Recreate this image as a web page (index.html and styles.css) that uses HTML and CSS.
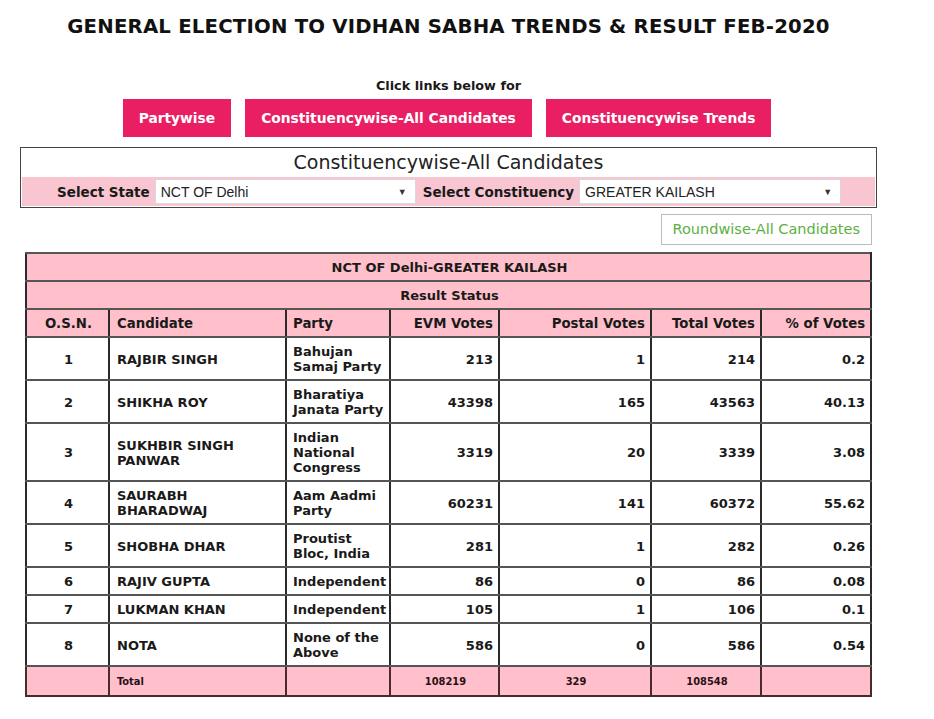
FILE: index.html
```html
<!DOCTYPE html>
<html>
<head>
<meta charset="utf-8">
<title>Election Result</title>
<link rel="stylesheet" href="styles.css">
</head>
<body>
<div class="page">
  <h1 class="title">GENERAL ELECTION TO VIDHAN SABHA TRENDS &amp; RESULT FEB-2020</h1>
  <p class="click">Click links below for</p>
  <div class="links">
    <a class="btn">Partywise</a>
    <a class="btn">Constituencywise-All Candidates</a>
    <a class="btn">Constituencywise Trends</a>
  </div>
  <div class="box">
    <div class="box-title">Constituencywise-All Candidates</div>
    <div class="select-row">
      <span class="label">Select State</span>
      <div class="select s1"><span>NCT OF Delhi</span><span class="arrow">▼</span></div>
      <span class="label">Select Constituency</span>
      <div class="select s2"><span>GREATER KAILASH</span><span class="arrow">▼</span></div>
    </div>
  </div>
  <div class="round-wrap"><a class="round">Roundwise-All Candidates</a></div>
  <table class="result">
    <colgroup>
      <col class="c1"><col class="c2"><col class="c3"><col class="c4"><col class="c5"><col class="c6"><col class="c7">
    </colgroup>
    <tr class="pink"><td colspan="7" class="center">NCT OF Delhi-GREATER KAILASH</td></tr>
    <tr class="pink"><td colspan="7" class="center">Result Status</td></tr>
    <tr class="pink head">
      <td class="center">O.S.N.</td><td>Candidate</td><td class="party">Party</td>
      <td class="num">EVM Votes</td><td class="num">Postal Votes</td><td class="num">Total Votes</td><td class="num">% of Votes</td>
    </tr>
    <tr><td class="center">1</td><td>RAJBIR SINGH</td><td class="party">Bahujan Samaj Party</td><td class="num">213</td><td class="num">1</td><td class="num">214</td><td class="num">0.2</td></tr>
    <tr><td class="center">2</td><td>SHIKHA ROY</td><td class="party">Bharatiya Janata Party</td><td class="num">43398</td><td class="num">165</td><td class="num">43563</td><td class="num">40.13</td></tr>
    <tr><td class="center">3</td><td>SUKHBIR SINGH PANWAR</td><td class="party">Indian National Congress</td><td class="num">3319</td><td class="num">20</td><td class="num">3339</td><td class="num">3.08</td></tr>
    <tr><td class="center">4</td><td class="narrow">SAURABH BHARADWAJ</td><td class="party">Aam Aadmi Party</td><td class="num">60231</td><td class="num">141</td><td class="num">60372</td><td class="num">55.62</td></tr>
    <tr><td class="center">5</td><td>SHOBHA DHAR</td><td class="party">Proutist Bloc, India</td><td class="num">281</td><td class="num">1</td><td class="num">282</td><td class="num">0.26</td></tr>
    <tr><td class="center">6</td><td>RAJIV GUPTA</td><td class="party">Independent</td><td class="num">86</td><td class="num">0</td><td class="num">86</td><td class="num">0.08</td></tr>
    <tr><td class="center">7</td><td>LUKMAN KHAN</td><td class="party">Independent</td><td class="num">105</td><td class="num">1</td><td class="num">106</td><td class="num">0.1</td></tr>
    <tr><td class="center">8</td><td>NOTA</td><td class="party">None of the Above</td><td class="num">586</td><td class="num">0</td><td class="num">586</td><td class="num">0.54</td></tr>
    <tr class="pink total"><td></td><td>Total</td><td></td><td class="center">108219</td><td class="center">329</td><td class="center">108548</td><td></td></tr>
  </table>
</div>
</body>
</html>
```
FILE: styles.css
```css
* { box-sizing: border-box; }
body {
  margin: 0;
  background: #fff;
  font-family: "DejaVu Sans", Verdana, sans-serif;
  color: #1a1a1a;
}
.page {
  width: 857px;
  margin-left: 20px;
  padding-top: 14px;
}
.title {
  margin: 0;
  text-align: center;
  font-size: 19.7px;
  font-weight: bold;
  line-height: 26px;
  letter-spacing: 0.2px;
  color: #111;
}
.click {
  margin: 38px 0 0;
  text-align: center;
  font-size: 12.8px;
  font-weight: bold;
  line-height: 16px;
}
.links {
  display: flex;
  justify-content: center;
  gap: 14px;
  margin-top: 5px;
  padding-right: 3px;
}
.btn {
  display: block;
  background: #e91e63;
  color: #fff;
  font-weight: bold;
  font-size: 13.8px;
  line-height: 38px;
  height: 38px;
  padding: 0 16px;
}
.box {
  margin-top: 10px;
  border: 1px solid #444;
  padding: 0 1px 1px;
}
.box-title {
  text-align: center;
  font-size: 19px;
  line-height: 29px;
  height: 29px;
  color: #222;
}
.select-row {
  background: #f8c5d0;
  display: flex;
  align-items: center;
  height: 29px;
  padding-left: 35px;
}
.label {
  font-weight: bold;
  font-size: 13.5px;
  margin-right: 5px;
  color: #1a1a1a;
}
.select {
  display: flex;
  justify-content: space-between;
  align-items: center;
  background: #fff;
  border: 1px solid #d8d8d8;
  height: 25px;
  padding: 0 8px 0 5px;
  font-family: "Liberation Sans", Arial, sans-serif;
  font-size: 14px;
  color: #222;
  margin-right: 7px;
}
.s1 { width: 261px; }
.s2 { width: 262px; }
.arrow { font-size: 9px; color: #333; }
.round-wrap {
  display: flex;
  justify-content: flex-end;
  margin-top: 6px;
  padding-right: 5px;
}
.round {
  display: block;
  border: 1px solid #bbb;
  background: #fff;
  color: #5cb043;
  font-size: 14.5px;
  height: 31px;
  line-height: 29px;
  padding: 0 11px;
}
.result {
  margin: 7px 0 0 5px;
  width: 845px;
  table-layout: fixed;
  border-collapse: collapse;
  font-size: 13px;
  font-weight: bold;
  color: #1a1a1a;
}
.c1 { width: 83px; }
.c2 { width: 177px; }
.c3 { width: 104px; }
.c4 { width: 109px; }
.c5 { width: 152px; }
.c6 { width: 110px; }
.c7 { width: 110px; }
.result td {
  border: 2px solid #2a2a2a;
  border-top-color: #555;
  border-bottom-color: #555;
  padding: 6px 5px 5px 7px;
  line-height: 15px;
  vertical-align: middle;
  text-align: left;
}
.result td.narrow { padding-right: 20px; }
.result td.party { padding-left: 6px; padding-right: 1px; }
.result td.center { text-align: center; }
.result td.num { text-align: right; padding-right: 5px; }
.pink td { background: #ffc0cb; }
.head td { font-size: 13.3px; }
.total td {
  font-family: "DejaVu Sans Condensed", "DejaVu Sans", sans-serif;
  font-stretch: condensed;
  font-size: 11px;
  color: #2a1015;
  border-color: #4a2a30;
  padding-top: 7px;
  padding-bottom: 6px;
}
```
